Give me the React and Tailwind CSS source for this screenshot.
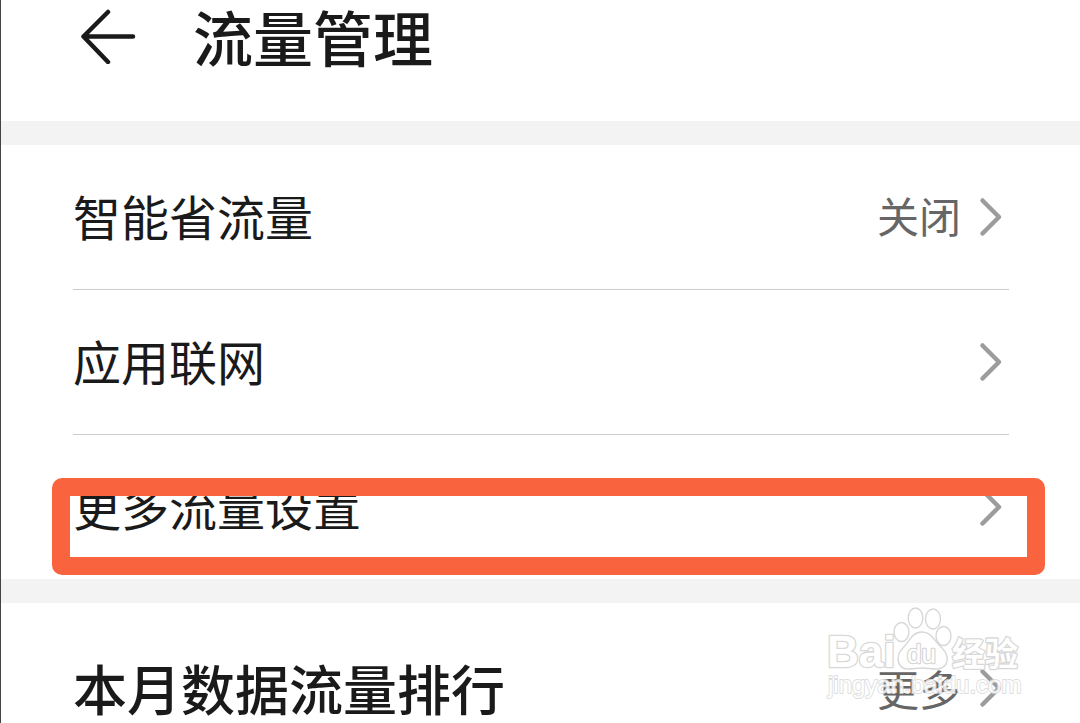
import React from "react";

function Chevron() {
  return (
    <svg className="h-10 w-6 shrink-0" viewBox="0 0 24 40" fill="none" stroke="#9c9c9c" strokeWidth="4.500" strokeLinecap="round" strokeLinejoin="round" aria-hidden="true">
      <path d="M3.500 3.500 L20 20 L3.500 36.500" />
    </svg>
  );
}

function Row({ label, value, divided, children }) {
  return (
    <div className={divided ? "relative border-b border-[#cccccc]" : "relative"}>
      <button type="button" className="flex h-36 w-full items-center justify-between pr-1.5 text-left">
        <span className="pb-1 text-[48px] leading-[72px]">{label}</span>
        <span className="flex items-center gap-[18px]">
          {value && <span className="pb-1 text-[42px] leading-[64px] text-[#666666]">{value}</span>}
          <Chevron />
        </span>
      </button>
      {children}
    </div>
  );
}

function Watermark() {
  return (
    <svg className="pointer-events-none absolute right-[52px] top-0 h-[104px] w-[208px]" viewBox="0 0 208 104" fill="none" stroke="#d8d8d8" strokeWidth="1.4" strokeLinejoin="round" aria-hidden="true">
      <ellipse cx="81.500" cy="29" rx="7.500" ry="9.500" />
      <ellipse cx="95.500" cy="15" rx="7.300" ry="10" />
      <ellipse cx="113" cy="16" rx="7.500" ry="10" />
      <ellipse cx="123.500" cy="33" rx="7.500" ry="9.500" />
      <path d="M102 29 C92 29 89 39 83 45 C75 53 77 66 88 66 C94 66 96 65 102 65 C108 65 111 66 117 66 C129 65 130 53 122 45 C114 38 112 29 102 29 Z" />
      <g fontFamily="'Liberation Sans', 'Noto Sans CJK SC', sans-serif" fill="#ffffff" paintOrder="stroke" strokeWidth="2.600">
        <text x="7" y="64" fontSize="44" fontWeight="700">Bai</text>
        <text x="87" y="60" fontSize="26">du</text>
        <text x="132" y="63" fontSize="33" fontWeight="700">经验</text>
        <text x="8" y="90" fontSize="24" strokeWidth="1.800" opacity="0.85">jingyan.baidu.com</text>
      </g>
    </svg>
  );
}

export default function App() {
  return (
    <div className="h-screen overflow-hidden border-l border-[#444444] bg-white font-['Noto_Sans_CJK_SC',sans-serif] text-[#1a1a1a]">
      <header className="flex items-start gap-14 px-[76px] pb-9">
        <button type="button" aria-label="返回" className="mt-2 shrink-0">
          <svg className="h-14 w-[60px]" viewBox="0 0 60 56" fill="none" stroke="#1a1a1a" strokeWidth="4.500" strokeLinecap="round" strokeLinejoin="round">
            <path d="M31 4 L6.500 28.500 L31 54 M6.500 28.500 H56" />
          </svg>
        </button>
        <h1 className="pb-[13px] text-[60px] font-medium leading-[72px]">流量管理</h1>
      </header>
      <div className="h-6 bg-[#f3f3f3]" />
      <main>
        <section className="pl-[72px] pr-[71px]">
          <Row label="智能省流量" value="关闭" divided />
          <Row label="应用联网" divided />
          <Row label="更多流量设置">
            <div className="pointer-events-none absolute -left-[21px] -right-9 bottom-1 top-[43px] rounded-[10px] border-[18px] border-[#f9643f]" />
          </Row>
        </section>
        <div className="h-6 bg-[#f3f3f3]" />
        <section className="relative">
          <div className="flex items-center justify-between pl-[72px] pr-[77px] pt-[45px]">
            <h2 className="text-[54px] font-medium leading-[80px]">本月数据流量排行</h2>
            <button type="button" className="flex items-center gap-[18px]">
              <span className="text-[42px] leading-[64px] text-[#666666]">更多</span>
              <Chevron />
            </button>
          </div>
          <Watermark />
        </section>
      </main>
    </div>
  );
}
